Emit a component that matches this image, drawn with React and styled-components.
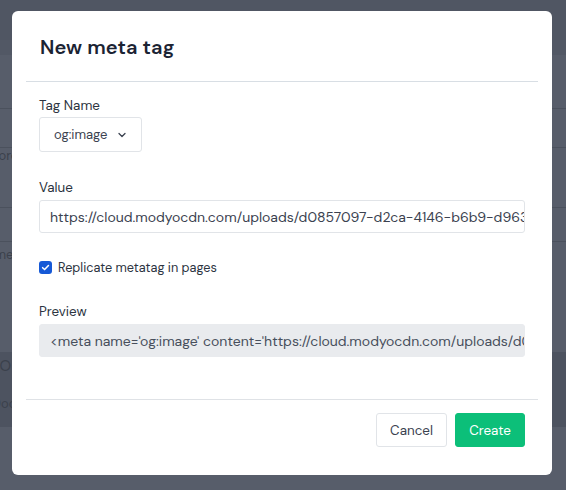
import React from "react";
import styled, { createGlobalStyle } from "styled-components";

const Global = createGlobalStyle`
  html, body { margin: 0; padding: 0; }
  body { font-family: "DM Sans", Inter, "Noto Sans", sans-serif; background: #565c69; }
  * { box-sizing: border-box; }
`;

const Page = styled.div`
  position: relative;
  width: 566px;
  height: 490px;
  overflow: hidden;
  background: #575d6a;
  display: flex;
  flex-direction: column;
`;

const BgBand = styled.div`
  height: ${(p) => p.h}px;
  flex: none;
  background: ${(p) => p.bg || "transparent"};
  border-bottom: ${(p) => (p.line ? "1px solid #4b515d" : "none")};
  display: flex;
  flex-direction: column;
  padding-top: ${(p) => p.pt || 0}px;
  gap: ${(p) => p.gap || 0}px;
  color: #3b414c;
  overflow: hidden;
`;

const BgText = styled.span`
  margin-left: ${(p) => p.ml}px;
  white-space: nowrap;
  line-height: 16px;
  font-size: ${(p) => p.fs || 13}px;
`;

const Modal = styled.div`
  position: absolute;
  left: 12px;
  top: 11px;
  width: 540px;
  height: 464px;
  background: #fff;
  border-radius: 6px;
  display: flex;
  flex-direction: column;
`;

const Header = styled.div`
  margin: 0 14px;
  height: 71px;
  border-bottom: 1px solid #d8dee4;
  display: flex;
  align-items: center;
  padding: 2px 0 0 14px;
`;

const Title = styled.h2`
  margin: 0;
  font-size: 20px;
  font-weight: 600;
  color: #1b2333;
  letter-spacing: 0.1px;
`;

const Body = styled.div`
  padding: 15px 27px 0 27px;
  display: flex;
  flex-direction: column;
  flex: 1;
`;

const Field = styled.div`
  display: flex;
  flex-direction: column;
  gap: ${(p) => p.gap || 5}px;
  margin-bottom: ${(p) => p.mb || 0}px;
`;

const Label = styled.label`
  font-size: 13.4px;
  color: #2c3441;
  line-height: 17px;
`;

const Select = styled.div`
  width: 103px;
  height: 35px;
  border: 1px solid #e1e4e8;
  border-radius: 3px;
  display: flex;
  align-items: center;
  padding-left: 14px;
  gap: 10px;
  font-size: 13px;
  color: #3b4250;
`;

const Input = styled.div`
  width: 486px;
  height: 33px;
  border: 1px solid ${(p) => (p.muted ? "#e9ebee" : "#e1e4e8")};
  background: ${(p) => (p.muted ? "#e9ebee" : "#fff")};
  border-radius: 3px;
  display: flex;
  align-items: center;
  padding: 0 10px;
  font-size: 14px;
  color: ${(p) => (p.muted ? "#474f5c" : "#3b4250")};
  white-space: nowrap;
  overflow: hidden;
`;

const CheckRow = styled.div`
  display: flex;
  align-items: center;
  gap: 6px;
  margin: 26px 0 27px;
  font-size: 12.7px;
  color: #2c3441;
`;

const Check = styled.span`
  width: 13px;
  height: 13px;
  border-radius: 3px;
  background: #1659d6;
  display: inline-flex;
  align-items: center;
  justify-content: center;
`;

const Footer = styled.div`
  margin: 0 14px;
  border-top: 1px solid #dfe2e6;
  height: 76px;
  display: flex;
  align-items: flex-start;
  justify-content: flex-end;
  gap: 8px;
  padding: 13px 13px 0 0;
`;

const Button = styled.button`
  height: 34px;
  padding: 0;
  border-radius: 3px;
  font-family: inherit;
  font-size: 13.4px;
  border: 1px solid ${(p) => (p.primary ? "#0cbf79" : "#e1e4e8")};
  background: ${(p) => (p.primary ? "#0cbf79" : "#fff")};
  color: ${(p) => (p.primary ? "#fff" : "#3b4250")};
  width: ${(p) => p.w}px;
`;

const url = "https://cloud.modyocdn.com/uploads/d0857097-d2ca-4146-b6b9-d9631c8f2b7e/original/og-image.png";

export default function App() {
  return (
    <>
      <Global />
      <Page>
        <BgBand h={40} bg="#505663" />
        <BgBand h={15} bg="#525865" />
        <BgBand h={54} line />
        <BgBand h={39} line />
        <BgBand h={60} line pt={0}>
          <BgText ml={-14}>Store</BgText>
        </BgBand>
        <BgBand h={34} line />
        <BgBand h={110} pt={5}>
          <BgText ml={-20}>name</BgText>
        </BgBand>
        <BgBand h={75} bg="#4d5360" pt={6} gap={22}>
          <BgText ml={-6} fs={15}>/O</BgText>
          <BgText ml={-8}>Doc</BgText>
        </BgBand>
        <BgBand h={63} bg="#575d6a" />
        <Modal>
          <Header>
            <Title>New meta tag</Title>
          </Header>
          <Body>
            <Field mb={27} gap={3}>
              <Label>Tag Name</Label>
              <Select>
                og:image
                <svg width="10" height="10" viewBox="0 0 10 10">
                  <path d="M2 3.5 L5 6.5 L8 3.5" fill="none" stroke="#3b4250" strokeWidth="1.3" strokeLinecap="round" strokeLinejoin="round" />
                </svg>
              </Select>
            </Field>
            <Field gap={4}>
              <Label>Value</Label>
              <Input>{url}</Input>
            </Field>
            <CheckRow>
              <Check>
                <svg width="9" height="9" viewBox="0 0 10 10">
                  <path d="M1.8 5.2 L4 7.3 L8.3 2.8" fill="none" stroke="#fff" strokeWidth="1.7" strokeLinecap="round" strokeLinejoin="round" />
                </svg>
              </Check>
              Replicate metatag in pages
            </CheckRow>
            <Field gap={4}>
              <Label>Preview</Label>
              <Input muted>{`<meta name='og:image' content='${url}' />`}</Input>
            </Field>
          </Body>
          <Footer>
            <Button w={71}>Cancel</Button>
            <Button primary w={70}>Create</Button>
          </Footer>
        </Modal>
      </Page>
    </>
  );
}
